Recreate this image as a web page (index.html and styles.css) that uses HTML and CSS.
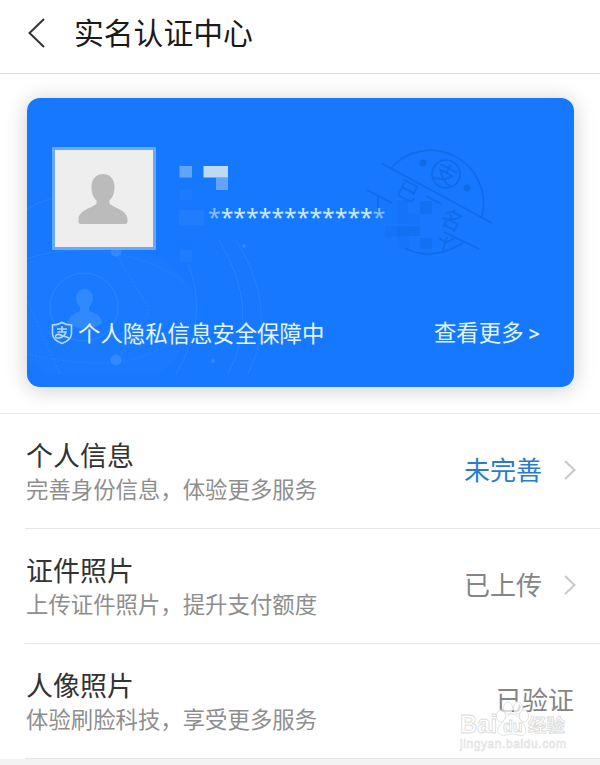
FILE: index.html
```html
<!DOCTYPE html>
<html lang="zh-CN">
<head>
  <meta charset="UTF-8" />
  <meta name="viewport" content="width=device-width, initial-scale=1.0"/>
  <title>实名认证中心</title>
  <link rel="stylesheet" href="styles.css">
</head>
<body>

  <header class="header">
    <svg class="back" width="18" height="30" viewBox="0 0 18 30"><path d="M16 1 L1.500 15 L16 29"/></svg>
    <h1>实名认证中心</h1>
  </header>

  <section class="card-wrap">
    <div class="card">
      <svg class="card-art" width="547" height="289" viewBox="27 98 547 289">
        <!-- background network -->
        <g class="net-fill">
          <path d="M27 262 Q80 240 140 252 Q190 265 197 310 Q192 350 158 374 H50 L27 360 Z"/>
        </g>
        <g class="net">
          <circle cx="84" cy="307" r="34"/>
          <path d="M27 209 Q40 201 53 198 M27 259 Q50 250 84 250"/>
          <path d="M188 263 Q210 318 176 374"/>
          <path d="M219 240 Q262 310 228 374 M236 240 Q280 310 248 374"/>
          <path d="M84 250 Q150 254 186 284 M27 354 Q80 366 120 362 Q170 354 190 320" stroke-dasharray="2 2"/>
          <path d="M116 254 L150 310 L116 362 M60 374 L27 300" stroke-dasharray="2 2"/>
        </g>
        <g class="net-dot">
          <circle cx="116" cy="251" r="5.500"/>
          <circle cx="116" cy="360" r="5.500"/>
          <circle cx="244" cy="246" r="2"/>
          <circle cx="213" cy="361" r="2"/>
          <path d="M76 298 a8.500 9 0 0 1 17 0 q0 5-4 9 v4 q12 3 13 12 q-17 12-34 0 q1-9 12-12 v-4 q-4-4-4-9z"/>
        </g>

        <!-- verified stamp -->
        <g class="stamp">
          <path d="M391 168 A53 53 0 0 1 482 216"/>
          <path d="M381 163 L492 223 M367 190 L392 203 M444 232 L479 249 M378 196 V212"/>
          <path d="M405 248 Q432 262 463 243"/>
          <path d="M447 237 L443 250 M446 243 L439 238 M446 243 L456 237"/>
          <path d="M426 196 L441 204"/>
          <circle cx="446" cy="174" r="14"/>
        </g>
        <g class="stamp-text">
          <circle cx="423" cy="163" r="3.500"/>
          <circle cx="467" cy="188" r="3.500"/>
          <text x="435" y="182" font-size="22" transform="rotate(27 446 174)">支</text>
          <text x="397" y="199" font-size="22" transform="rotate(27 408 191)">已</text>
          <text x="441" y="228" font-size="22" transform="rotate(27 452 220)">名</text>
        </g>
        <g class="stamp-block">
          <rect x="397" y="200" width="11" height="24" opacity=".5"/>
          <rect x="420" y="201" width="12" height="13"/>
          <rect x="408" y="214" width="12" height="11" opacity=".3"/>
          <rect x="385" y="226" width="12" height="11" opacity=".5"/>
          <rect x="397" y="226" width="23" height="10"/>
          <rect x="397" y="236" width="12" height="13" opacity=".4"/>
          <rect x="420" y="238" width="12" height="11"/>
        </g>

        <!-- masked name -->
        <g class="mask">
          <rect x="179.500" y="166" width="12.500" height="11.500" opacity=".45"/>
          <rect x="203.500" y="166" width="24.500" height="11.500"/>
          <rect x="216" y="177.500" width="12" height="12.500" opacity=".45"/>
          <rect x="180" y="190" width="12" height="10" opacity=".03"/>
          <rect x="179" y="210" width="25" height="15" opacity=".06"/>
          <rect x="180" y="250" width="12" height="12" opacity=".05"/>
        </g>
      </svg>

      <div class="profile">
        <div class="avatar">
          <svg width="50" height="50" viewBox="0 0 50 50"><path d="M13.500 13 C13.500 4 19 0 25 0 S36.500 4 36.500 13 C36.500 20 34 24 31.500 26.500 V29 C32 33 49 35 49.500 45 V48 Q49.500 50 47 50 H3 Q.5 50 .5 48 V45 C1 35 18 33 18.500 29 V26.500 C16 24 13.500 20 13.500 13Z"/></svg>
        </div>
        <div class="id-number"><span>*</span>************<span>*</span></div>
      </div>

      <div class="card-foot">
        <svg class="shield" width="22" height="24" viewBox="0 0 22 24">
          <path d="M11 1.500 Q15 4 20.500 4 V13 Q20 19 11 22.500 Q2 19 1.500 13 V4 Q7 4 11 1.500Z"/>
          <path d="M6 8 H16 M11 5 V11 M6.500 11 H15 Q13 17 7 17 Q4 17 4.500 15 Q6 12 11 14.500 L18 17"/>
        </svg>
        <span class="privacy">个人隐私信息安全保障中</span>
        <a class="more">查看更多 <i>&gt;</i></a>
      </div>
    </div>
  </section>

  <ul class="list">
    <li class="row">
      <div class="info">
        <h2>个人信息</h2>
        <p>完善身份信息，体验更多服务</p>
      </div>
      <span class="status todo">未完善</span>
      <svg class="arrow" width="12" height="20" viewBox="0 0 12 20"><path d="M1 1 L10.500 10 L1 19"/></svg>
    </li>
    <li class="row">
      <div class="info">
        <h2>证件照片</h2>
        <p>上传证件照片，提升支付额度</p>
      </div>
      <span class="status">已上传</span>
      <svg class="arrow" width="12" height="20" viewBox="0 0 12 20"><path d="M1 1 L10.500 10 L1 19"/></svg>
    </li>
    <li class="row">
      <div class="info">
        <h2>人像照片</h2>
        <p>体验刷脸科技，享受更多服务</p>
      </div>
      <span class="status last">已验证</span>
    </li>
  </ul>

  <svg class="watermark" width="120" height="58" viewBox="0 0 120 58">
    <text class="brand" x="1" y="33" font-size="25" textLength="37" lengthAdjust="spacingAndGlyphs">Bai</text>
    <g class="paw">
      <ellipse cx="42" cy="16" rx="4.500" ry="6"/>
      <ellipse cx="49" cy="8" rx="4.500" ry="6"/>
      <ellipse cx="59" cy="8" rx="4.500" ry="6"/>
      <ellipse cx="65" cy="16" rx="4.500" ry="6"/>
      <path d="M53 14 C59 14 61 20 65 25 C70 33 64 37 59 35 Q53 33 47 35 C40 37 36 31 41 25 C46 20 47 14 53 14Z"/>
    </g>
    <text class="brand" x="44" y="32" font-size="16">du</text>
    <text class="brand cn" x="69" y="32" font-size="18.500" textLength="37">经验</text>
    <text class="url" x="1" y="48" font-size="12" textLength="106">jingyan.baidu.com</text>
  </svg>

</body>
</html>
```

FILE: styles.css
```css
* {
  box-sizing: border-box;
}

body {
  font-family: "Noto Sans CJK SC", "Noto Sans", sans-serif;
  margin: 0;
  height: 765px;
  overflow: hidden;
  background: #f3f3f3;
  color: #333;
}

h1, h2, p, ul {
  margin: 0;
  padding: 0;
  font-weight: 400;
}

.header {
  display: flex;
  align-items: center;
  height: 74px;
  padding: 0 0 8px 28px;
  background: #fff;
  border-bottom: 1px solid #dcdcdc;
}

.back {
  fill: none;
  stroke: #333;
  stroke-width: 2;
}

.header h1 {
  margin-left: 28px;
  padding-bottom: 4px;
  font-size: 29.8px;
  line-height: 40px;
  color: #1a1a1a;
}

.card-wrap {
  height: 340px;
  padding: 24px 26px 0 27px;
  background: #fff;
  border-bottom: 1px solid #e9e9e9;
  overflow: hidden;
}

.card {
  position: relative;
  display: flex;
  flex-direction: column;
  justify-content: space-between;
  height: 289px;
  padding: 49px 33px 39px 25px;
  border-radius: 13px;
  background: #1678ff;
  box-shadow: 0 2px 22px rgba(0, 0, 0, 0.2);
}

.card-art {
  position: absolute;
  top: 0;
  left: 0;
}

.net-fill {
  fill: #fff;
  opacity: 0.02;
}

.net {
  fill: none;
  stroke: #6bb0ff;
  opacity: 0.2;
}

.net-dot {
  fill: #5ea6ff;
  opacity: 0.35;
}

.stamp {
  fill: none;
  stroke: #0b60d8;
  stroke-width: 1.6;
  opacity: 0.5;
}

.stamp-text {
  fill: #0b60d8;
  opacity: 0.5;
}

.stamp-block {
  fill: #0d69e6;
  opacity: 0.45;
}

.mask {
  fill: #bcdaf2;
}

.profile,
.card-foot {
  position: relative;
  display: flex;
}

.avatar {
  display: flex;
  align-items: center;
  justify-content: center;
  width: 104px;
  height: 103px;
  padding-right: 2px;
  border: 3px solid #68a9fa;
  border-radius: 1px;
  background: #eee;
}

.avatar svg {
  fill: #bbb;
}

.id-number {
  margin: 55px 0 0 52px;
  font-family: "Noto Sans", sans-serif;
  font-size: 23px;
  line-height: 30px;
  color: #c9e8ff;
}

.id-number span {
  opacity: 0.6;
}

.card-foot {
  align-items: center;
  height: 32px;
  font-size: 22.4px;
  line-height: 32px;
  color: #e2f5ff;
}

.shield {
  margin: 2px 5px 0 -1px;
  fill: none;
  stroke: #b5dcff;
  stroke-width: 1.6;
}

.more {
  margin: 0 1px 0 auto;
}

.more i {
  font-family: "Noto Sans", sans-serif;
  font-style: normal;
  font-size: 20px;
  font-weight: 600;
}

.list {
  list-style: none;
  background: #fff;
}

.row {
  display: flex;
  align-items: center;
  height: 115px;
  margin-left: 25px;
  padding: 0 24px 0 1px;
  border-bottom: 1px solid #e6e6e6;
}

.info {
  flex: 1;
}

.info h2 {
  font-size: 27px;
  line-height: 36px;
}

.info p {
  padding-bottom: 1px;
  font-size: 22.4px;
  line-height: 31px;
  color: #8e8e8e;
}

.status {
  padding-bottom: 4px;
  font-size: 26px;
  line-height: 36px;
  color: #858585;
}

.todo {
  color: #2a7bd0;
}

.last {
  margin-right: 2px;
}

.arrow {
  margin: 0 0 2px 22px;
  fill: none;
  stroke: #c9c9c9;
  stroke-width: 2;
}

/* site mark over the last row */
.watermark {
  position: absolute;
  left: 459px;
  top: 700px;
  font-family: "Liberation Sans", "Noto Sans CJK SC", sans-serif;
  font-weight: 700;
}

.brand, .paw {
  fill: rgba(255, 255, 255, 0.7);
  stroke: #dadada;
  stroke-width: 0.8;
}

.url {
  fill: #fff;
  stroke: #dedede;
  stroke-width: 0.6;
  font-weight: 400;
}
```
